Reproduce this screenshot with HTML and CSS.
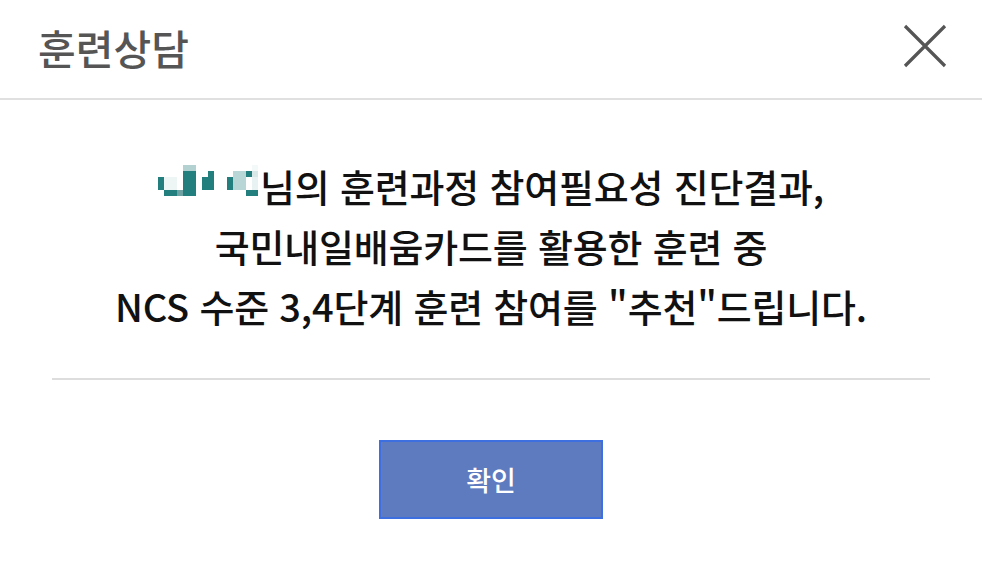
FILE: index.html
```html
<!DOCTYPE html>
<html lang="ko">
<head>
    <meta charset="UTF-8">
    <meta name="viewport" content="width=device-width, initial-scale=1.0">
    <title>훈련상담</title>
    <link rel="stylesheet" href="styles.css">
</head>
<body>

<div class="modal">
    <header class="modal-header">
        <h2>훈련상담</h2>
        <button class="close-button" aria-label="닫기">
            <svg width="44" height="44" viewBox="0 0 44 44">
                <path d="M2 2 L42 42 M42 2 L2 42" stroke="#555" stroke-width="3.2" fill="none"/>
            </svg>
        </button>
    </header>

    <main class="modal-body">
        <p class="message">
            <!-- 이름은 모자이크 처리 -->
            <svg class="name-mask" width="100" height="31" viewBox="0 0 100 31">
                <rect x="0" y="12" width="6" height="13" fill="#237f7d"/>
                <rect x="6" y="12" width="13" height="13" fill="#eef5f5"/>
                <rect x="6" y="25" width="13" height="6" fill="#237f7d"/>
                <rect x="19" y="25" width="6" height="6" fill="#6fa3a3"/>
                <rect x="25" y="0" width="13" height="6" fill="#b3d1d1"/>
                <rect x="25" y="6" width="13" height="25" fill="#237f7d"/>
                <rect x="50" y="6" width="6" height="6" fill="#237f7d"/>
                <rect x="44" y="12" width="12" height="13" fill="#237f7d"/>
                <rect x="69" y="12" width="6" height="13" fill="#237f7d"/>
                <rect x="75" y="6" width="13" height="19" fill="#b9d6d6"/>
                <rect x="88" y="6" width="6" height="6" fill="#237f7d"/>
                <rect x="94" y="6" width="6" height="6" fill="#d8e8e8"/>
                <rect x="94" y="0" width="6" height="6" fill="#f3f8f8"/>
                <rect x="94" y="12" width="6" height="13" fill="#e8f2f2"/>
                <rect x="88" y="25" width="12" height="6" fill="#237f7d"/>
            </svg>님의 훈련과정 참여필요성 진단결과,<br>
            국민내일배움카드를 활용한 훈련 중<br>
            NCS 수준 3,4단계 훈련 참여를 "추천"드립니다.
        </p>
        <hr class="divider">
        <div class="actions">
            <button class="confirm-button">확인</button>
        </div>
    </main>
</div>

</body>
</html>
```

FILE: styles.css
```css
body {
    font-family: "Noto Sans CJK KR", "Noto Sans", sans-serif;
    background-color: #fff;
    color: #111;
    margin: 0;
    padding: 0;
}

.modal {
    width: 982px;
}

.modal-header {
    height: 98px;
    padding: 0 35px 0 38px;
    display: flex;
    justify-content: space-between;
    align-items: center;
    border-bottom: 2px solid #e0e0e0;
}

.modal-header h2 {
    font-size: 41px;
    font-weight: 500;
    color: #555;
    margin: 0;
    margin-top: -4px;
}

.close-button {
    background: none;
    border: none;
    padding: 0;
    width: 44px;
    height: 44px;
    cursor: pointer;
    margin-top: -6px;
}

.close-button svg {
    display: block;
}

.modal-body {
    padding: 56px 52px 0;
}

.message {
    margin: 0;
    text-align: center;
    font-size: 38px;
    font-weight: 500;
    line-height: 60px;
    color: #111;
    letter-spacing: -0.2px;
}

.name-mask {
    vertical-align: 6px;
    margin-right: 2px;
}

.divider {
    border: none;
    border-top: 2px solid #ddd;
    margin: 42px 0 0;
}

.actions {
    display: flex;
    justify-content: center;
    margin-top: 60px;
}

.confirm-button {
    width: 224px;
    height: 79px;
    background-color: #5e7bbf;
    border: 2px solid #3d6fe0;
    color: #fff;
    font-family: inherit;
    font-size: 27px;
    font-weight: 500;
    cursor: pointer;
}
```
